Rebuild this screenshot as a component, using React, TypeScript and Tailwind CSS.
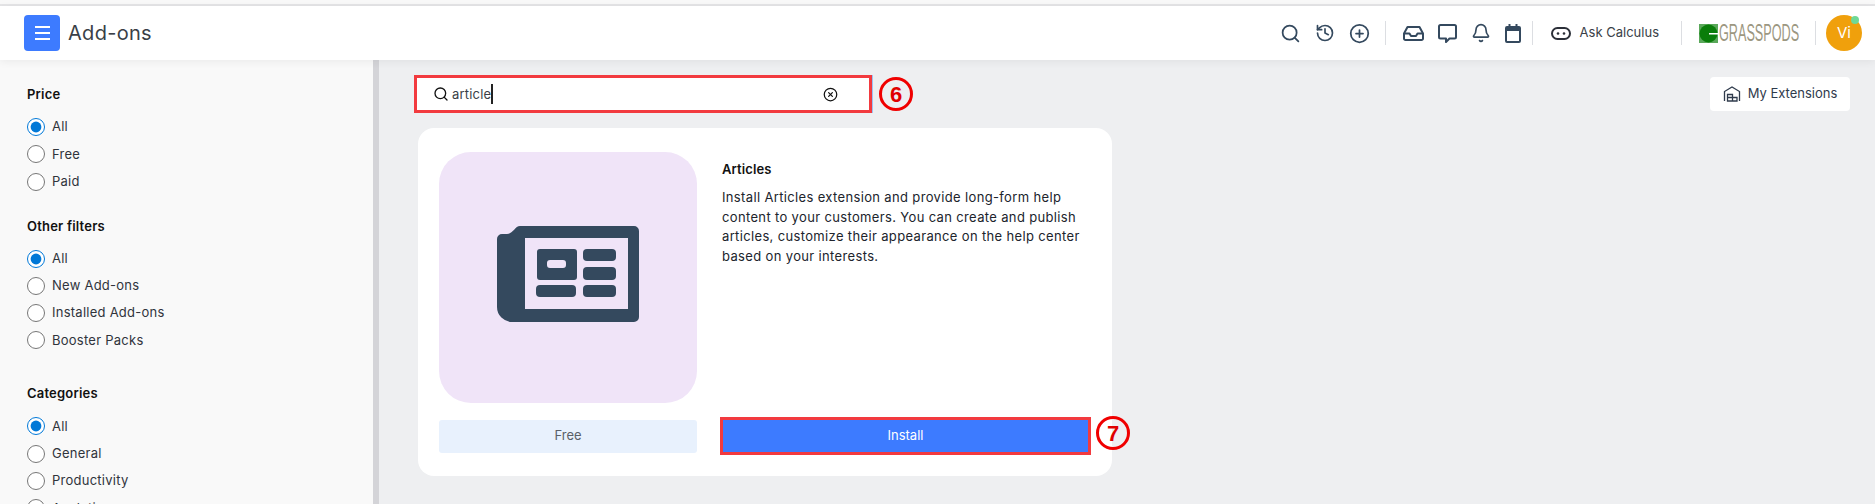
import { Search, History, CirclePlus, Bell, CircleX } from 'lucide-react';

const font = "font-['Inter','Liberation_Sans',sans-serif]";

const filterGroups = [
  { title: 'Price', name: 'price', mb: 'mb-[25px]', options: ['All', 'Free', 'Paid'] },
  { title: 'Other filters', name: 'other', mb: 'mb-[34px]', options: ['All', 'New Add-ons', 'Installed Add-ons', 'Booster Packs'] },
  { title: 'Categories', name: 'cat', mb: 'mb-0', options: ['All', 'General', 'Productivity', 'Analytics'] },
];

function InboxIcon() {
  return (
    <svg width="21" height="15" viewBox="0 0 21 15" fill="none" stroke="#34495e" strokeWidth="2" strokeLinejoin="round">
      <path d="M1 7.500 4.500 1h12l3.500 6.500V12.500a1.500 1.500 0 0 1-1.500 1.500H2.500A1.500 1.500 0 0 1 1 12.500Z" />
      <path d="M1 7.500h5.500l1.500 2.500h5l1.500-2.500H20" />
    </svg>
  );
}

function ChatIcon() {
  return (
    <svg width="19" height="19" viewBox="0 0 19 19" fill="none" stroke="#34495e" strokeWidth="2" strokeLinejoin="round">
      <path d="M2.500 1h14A1.500 1.500 0 0 1 18 2.500V13a1.500 1.500 0 0 1-1.500 1.500H11.500L8 18v-3.500H2.500A1.500 1.500 0 0 1 1 13V2.500A1.500 1.500 0 0 1 2.500 1Z" />
    </svg>
  );
}

function CalendarIcon() {
  return (
    <svg width="16" height="19" viewBox="0 0 16 19" fill="none" stroke="#34495e" strokeWidth="2">
      <rect x="1" y="3" width="14" height="15" rx="1" />
      <path d="M1 5.500h14" strokeWidth="3" />
      <path d="M4.500 0v3M11.500 0v3" />
    </svg>
  );
}

function BotIcon() {
  return (
    <svg width="20" height="13" viewBox="0 0 20 13" fill="none">
      <rect x="1" y="1" width="18" height="11" rx="5.500" stroke="#2b2f38" strokeWidth="2" />
      <circle cx="7" cy="6.500" r="1.300" fill="#2b2f38" />
      <circle cx="13" cy="6.500" r="1.300" fill="#2b2f38" />
    </svg>
  );
}

function GrasspodsMark() {
  return (
    <svg width="19" height="19" viewBox="0 0 19 19">
      <rect width="19" height="19" fill="#5aa85a" />
      <circle cx="9.500" cy="9.500" r="9" fill="#0a7d0a" />
      <rect x="10" y="9" width="9" height="1.500" fill="#fff" />
    </svg>
  );
}

function ExtensionsIcon() {
  return (
    <svg width="18" height="16" viewBox="0 0 18 16" fill="none" stroke="#2f3b4c" strokeWidth="1.300">
      <path d="M1.500 15V5.500L9 1l7.500 4.500V15" />
      <path d="M4.500 8.500h5v3h-5zM4.500 11.500h5V15h-5zM9.500 11.500h4.500V15H9.500z" />
    </svg>
  );
}

function NewspaperArt() {
  return (
    <svg width="143" height="96" viewBox="0 0 143 96" fill="#34495e">
      <path
        fillRule="evenodd"
        d="M23 0H137a5 5 0 0 1 5 5V91a5 5 0 0 1-5 5H15A15 15 0 0 1 0 81V13a5 5 0 0 1 5-5H10C16 8 18 0 23 0ZM28 12V83H131V12Z"
      />
      <path
        fillRule="evenodd"
        d="M43 23H77a3 3 0 0 1 3 3V51a3 3 0 0 1-3 3H43a3 3 0 0 1-3-3V26a3 3 0 0 1 3-3ZM53 34a3 3 0 0 0-3 3v2a3 3 0 0 0 3 3H66a3 3 0 0 0 3-3V37a3 3 0 0 0-3-3Z"
      />
      <rect x="86" y="23" width="33" height="12" rx="4" />
      <rect x="86" y="41" width="33" height="13" rx="4" />
      <rect x="39" y="59" width="40" height="12" rx="4" />
      <rect x="86" y="59" width="33" height="12" rx="4" />
    </svg>
  );
}

function StepBadge({ n }: { n: number }) {
  return (
    <div className="w-[34px] h-[34px] rounded-full border-[3px] border-[#f00000] flex items-center justify-center shrink-0 text-[#e00000] text-[22px] font-bold font-['Liberation_Sans',sans-serif]">
      {n}
    </div>
  );
}

function Divider() {
  return <div className="w-px h-[24px] bg-[#dcdee2]" />;
}

export default function App() {
  return (
    <div className={`${font} w-[1875px] h-[504px] overflow-hidden flex flex-col bg-[#eeeff1] text-[#1f2430]`}>
      <div className="h-[6px] shrink-0 bg-[#f8f8f8] border-b-2 border-[#e4e4e6]" />

      {/* Top bar */}
      <header className="relative z-10 h-[54px] shrink-0 bg-white shadow-[0_2px_8px_rgba(0,0,0,0.06)] flex items-center pl-[24px] pr-[13px]">
        <button className="w-[36px] h-[36px] rounded-[4px] bg-[#3d7bff] flex items-center justify-center">
          <span className="flex flex-col gap-[4px]">
            <span className="block w-[15px] h-[2px] bg-white" />
            <span className="block w-[15px] h-[2px] bg-white" />
            <span className="block w-[15px] h-[2px] bg-white" />
          </span>
        </button>
        <h1 className="ml-[8px] text-[20px] text-[#3a3f47] tracking-[0.3px]">Add-ons</h1>

        <div className="ml-auto flex items-center">
          <Search className="w-[21px] h-[21px] text-[#34495e]" strokeWidth={2} />
          <History className="ml-[14px] w-[20px] h-[20px] text-[#34495e]" strokeWidth={2} />
          <CirclePlus className="ml-[14px] w-[21px] h-[21px] text-[#34495e]" strokeWidth={2} />
          <div className="ml-[15px]"><Divider /></div>
          <div className="ml-[17px]"><InboxIcon /></div>
          <div className="ml-[14px]"><ChatIcon /></div>
          <Bell className="ml-[14px] w-[20px] h-[20px] text-[#34495e]" strokeWidth={2} />
          <div className="ml-[14px]"><CalendarIcon /></div>
          <div className="ml-[11px]"><Divider /></div>
          <div className="ml-[18px]"><BotIcon /></div>
          <span className="ml-[9px] text-[13px] text-[#3a3f47]">Ask Calculus</span>
          <div className="ml-[22px]"><Divider /></div>
          <div className="ml-[17px] flex items-center gap-[1px]">
            <GrasspodsMark />
            <span className="block w-[79px] text-[23px] leading-none text-[#9c9781] whitespace-nowrap origin-left scale-x-[0.55] font-['Liberation_Sans',sans-serif]">GRASSPODS</span>
          </div>
          <div className="ml-[17px]"><Divider /></div>
          <div className="relative ml-[10px] w-[36px] h-[36px] rounded-full bg-[#f0a00c] flex items-center justify-center text-white text-[15px]">
            Vi
            <span className="absolute top-[1px] right-[3px] w-[8px] h-[8px] rounded-full bg-[#6fd896]" />
          </div>
        </div>
      </header>

      <div className="flex-1 min-h-0 flex">
        {/* Filters */}
        <aside className="w-[379px] shrink-0 bg-[#f9f9f9] border-r-[6px] border-[#d4d4d8] pl-[27px] pt-[24px] overflow-hidden">
          {filterGroups.map(group => (
            <section key={group.name} className={group.mb}>
              <h2 className="text-[13px] font-semibold text-[#111] leading-[20px] mb-[14px] tracking-[0.2px]">{group.title}</h2>
              <div className="flex flex-col gap-[9.300px]">
                {group.options.map((opt, i) => (
                  <label key={opt} className="flex items-center gap-[7px] h-[18px] text-[13px] text-[#30343c] tracking-[0.25px]">
                    <input
                      type="radio"
                      name={group.name}
                      defaultChecked={i === 0}
                      className="w-[18px] h-[18px] m-0 accent-[#0078d7]"
                    />
                    {opt}
                  </label>
                ))}
              </div>
            </section>
          ))}
        </aside>

        {/* Results */}
        <main className="flex-1 min-w-0 pl-[35px] pr-[25px] pt-[15px]">
          <div className="flex items-center justify-between">
            <div className="flex items-center gap-[7px]">
              <div className="w-[458px] h-[38px] border-[3px] border-[#f23a3f] bg-white shadow-[1px_0_0_#9cc3f5] flex items-center pl-[16px] pr-[31px] text-[13px] text-[#3a3f47] tracking-[0.2px]">
                <Search className="w-[16px] h-[16px] text-[#111] shrink-0" strokeWidth={2} />
                <span className="ml-[3px] border-r-2 border-[#222] leading-[20px]">article</span>
                <CircleX className="ml-auto w-[15px] h-[15px] text-[#111]" strokeWidth={2} />
              </div>
              <StepBadge n={6} />
            </div>
            <button className="w-[140px] h-[34px] rounded-[4px] bg-white flex items-center justify-center gap-[7px] text-[13px] text-[#2f3b4c]">
              <ExtensionsIcon />
              My Extensions
            </button>
          </div>

          <div className="ml-[4px] mt-[15px] flex items-start">
            <article className="w-[694px] h-[348px] shrink-0 rounded-[16px] bg-white pl-[21px] pr-[21px] pt-[24px]">
              <div className="flex gap-[25px] h-[251px]">
                <div className="w-[258px] h-[251px] shrink-0 rounded-[32px] bg-[#f0e4f8] flex items-center justify-center pb-[7px]">
                  <NewspaperArt />
                </div>
                <div className="pt-[7px] text-[13px]">
                  <h3 className="font-semibold text-[#111] leading-[20px] mb-[9px] tracking-[0.1px]">Articles</h3>
                  <p className="text-[#20242c] leading-[19.500px] whitespace-nowrap tracking-[0.35px]">
                    Install Articles extension and provide long-form help<br />
                    content to your customers. You can create and publish<br />
                    articles, customize their appearance on the help center<br />
                    based on your interests.
                  </p>
                </div>
              </div>
              <div className="mt-[14px] flex items-center">
                <div className="w-[258px] h-[33px] rounded-[3px] bg-[#e8f1fd] flex items-center justify-center text-[13px] text-[#5a5f68]">Free</div>
                <button className="ml-[23px] w-[371px] h-[38px] border-[3px] border-[#f23a3f] bg-[#3d7bff] flex items-center justify-center text-[13px] text-white">Install</button>
              </div>
            </article>
            <div className="-ml-[16px] mt-[288px] relative"><StepBadge n={7} /></div>
          </div>
        </main>
      </div>
    </div>
  );
}
